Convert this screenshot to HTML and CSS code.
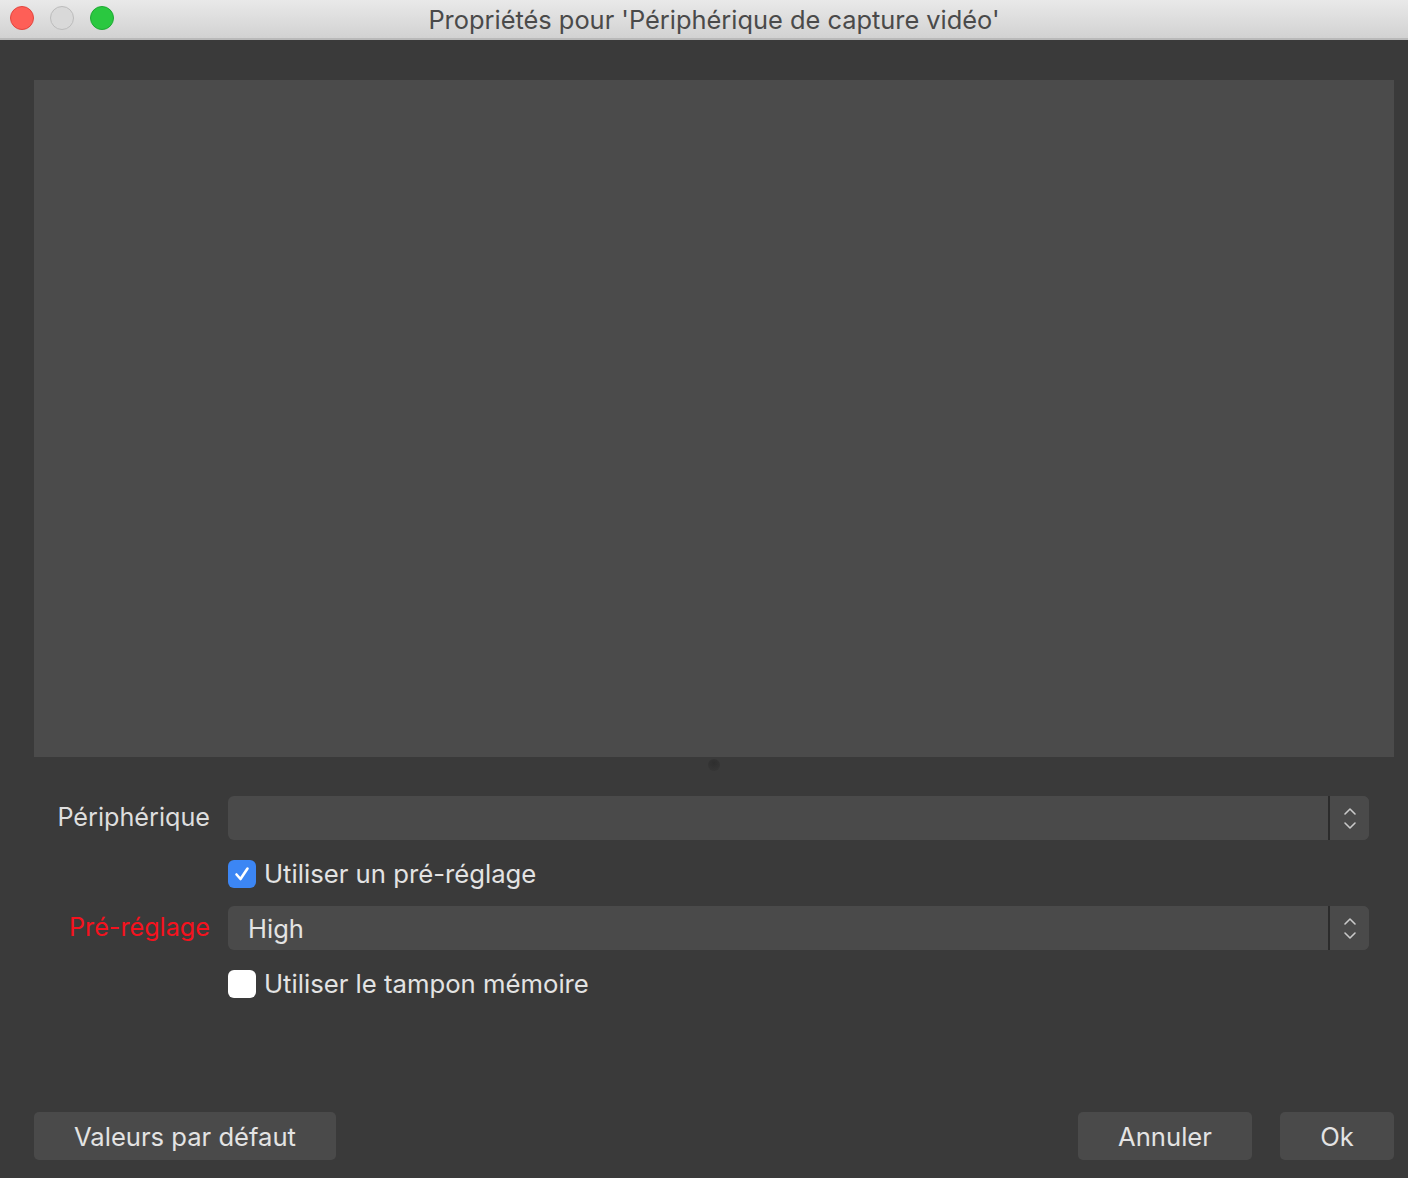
FILE: index.html
```html
<!DOCTYPE html>
<html lang="fr">
<head>
<meta charset="utf-8">
<title>Propriétés</title>
<link rel="stylesheet" href="styles.css">
</head>
<body>
<div class="window">
  <div class="titlebar">
    <div class="lights">
      <span class="light red"></span>
      <span class="light gray"></span>
      <span class="light green"></span>
    </div>
    <div class="title">Propriétés pour 'Périphérique de capture vidéo'</div>
  </div>
  <div class="content">
    <div class="preview"></div>
    <div class="splitter"><span class="handle"></span></div>
    <div class="form">
      <label class="label">Périphérique</label>
      <div class="combo">
        <span class="combo-value"></span>
        <span class="stepper">
          <svg width="14" height="24" viewBox="0 0 14 24"><path d="M2 8 L7 3 L12 8" fill="none" stroke="#c9c9c9" stroke-width="1.6" stroke-linecap="round" stroke-linejoin="round"/><path d="M2 17 L7 22 L12 17" fill="none" stroke="#c9c9c9" stroke-width="1.6" stroke-linecap="round" stroke-linejoin="round"/></svg>
        </span>
      </div>

      <span></span>
      <div class="check-row">
        <span class="box checked">
          <svg width="20" height="20" viewBox="0 0 20 20"><path d="M4.5 10.5 L8.5 15 L15.5 4.5" fill="none" stroke="#fff" stroke-width="2.6" stroke-linecap="round" stroke-linejoin="round"/></svg>
        </span>
        <span class="check-text">Utiliser un pré-réglage</span>
      </div>

      <label class="label error">Pré-réglage</label>
      <div class="combo">
        <span class="combo-value">High</span>
        <span class="stepper">
          <svg width="14" height="24" viewBox="0 0 14 24"><path d="M2 8 L7 3 L12 8" fill="none" stroke="#c9c9c9" stroke-width="1.6" stroke-linecap="round" stroke-linejoin="round"/><path d="M2 17 L7 22 L12 17" fill="none" stroke="#c9c9c9" stroke-width="1.6" stroke-linecap="round" stroke-linejoin="round"/></svg>
        </span>
      </div>

      <span></span>
      <div class="check-row">
        <span class="box"></span>
        <span class="check-text">Utiliser le tampon mémoire</span>
      </div>
    </div>
    <div class="spacer"></div>
    <div class="buttons">
      <button class="btn btn-default">Valeurs par défaut</button>
      <div class="btn-group">
        <button class="btn btn-cancel">Annuler</button>
        <button class="btn btn-ok">Ok</button>
      </div>
    </div>
  </div>
</div>
</body>
</html>
```

FILE: styles.css
```css
* { box-sizing: border-box; }
html, body {
  margin: 0;
  padding: 0;
  width: 1408px;
  height: 1178px;
  overflow: hidden;
  background: #3a3a3a;
  font-family: Inter, "Noto Sans", "Liberation Sans", sans-serif;
}
.window {
  width: 1408px;
  height: 1178px;
  display: flex;
  flex-direction: column;
}
.titlebar {
  height: 40px;
  flex: none;
  position: relative;
  background: linear-gradient(#e9e9e9, #d2d2d2);
  border-bottom: 2px solid #b9b9b9;
  display: flex;
  align-items: center;
  justify-content: center;
  padding-left: 20px;
}
.lights {
  position: absolute;
  left: 10px;
  top: 6px;
  display: flex;
  gap: 16px;
}
.light {
  width: 24px;
  height: 24px;
  border-radius: 50%;
  display: block;
}
.light.red { background: #fe5f57; border: 1px solid #e2463f; }
.light.gray { background: #d9d9d9; border: 1px solid #bcbcbc; }
.light.green { background: #2ac840; border: 1px solid #1fa934; }
.title {
  font-size: 25.4px;
  color: #4a4a4a;
}
.content {
  flex: 1;
  display: flex;
  flex-direction: column;
  padding: 40px 14px 18px 34px;
}
.preview {
  height: 677px;
  flex: none;
  background: #4b4b4b;
}
.splitter {
  height: 39px;
  flex: none;
  display: flex;
  justify-content: center;
  padding-top: 2px;
}
.handle {
  width: 12px;
  height: 12px;
  border-radius: 50%;
  background: radial-gradient(circle at 50% 35%, #2e2e2e, #353535 70%);
}
.form {
  display: grid;
  grid-template-columns: 176px 1141px;
  column-gap: 18px;
  row-gap: 10px;
  grid-template-rows: 44px 46px 44px 46px;
}
.label {
  font-size: 25.2px;
  color: #dedede;
  text-align: right;
  align-self: center;
  white-space: nowrap;
  line-height: 1;
}
.label.error { color: #f5121e; }
.combo {
  display: flex;
  height: 44px;
  border-radius: 6px;
  background: #4a4a4a;
  overflow: hidden;
}
.combo-value {
  flex: 1;
  font-size: 25.5px;
  color: #e3e3e3;
  padding-left: 20px;
  display: flex;
  align-items: center;
}
.stepper {
  width: 41px;
  border-left: 2px solid #2b2b2b;
  display: flex;
  align-items: center;
  justify-content: center;
  background: #4a4a4a;
}
.check-row {
  display: flex;
  align-items: center;
  gap: 8px;
  padding-top: 1px;
}
.box {
  width: 28px;
  height: 28px;
  border-radius: 6px;
  background: #ffffff;
  display: flex;
  align-items: center;
  justify-content: center;
}
.box.checked { background: #3c86f4; }
.check-text {
  font-size: 25.7px;
  color: #e3e3e3;
}
.spacer { flex: 1; }
.buttons {
  display: flex;
  justify-content: space-between;
  height: 48px;
}
.btn-group {
  display: flex;
  gap: 28px;
}
.btn {
  height: 48px;
  border: none;
  border-radius: 5px;
  background: #4a4a4a;
  color: #e3e3e3;
  font-family: inherit;
  font-size: 25.6px;
  padding: 0;
}
.btn-default { width: 302px; }
.btn-cancel { width: 174px; }
.btn-ok { width: 114px; }
```
